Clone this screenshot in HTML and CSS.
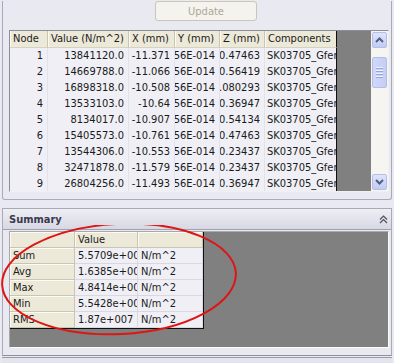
FILE: index.html
```html
<!DOCTYPE html>
<html lang="en">
<head>
    <meta charset="UTF-8">
    <title>Results</title>
    <link rel="stylesheet" href="styles.css">
</head>
<body>

    <div class="top-panel">
        <div class="toolbar">
            <button class="update-btn" disabled>Update</button>
        </div>

        <div class="grid-box">
            <div class="grid-area">
                <div class="data-grid">
                    <div class="hcell">Node</div>
                    <div class="hcell">Value (N/m^2)</div>
                    <div class="hcell">X (mm)</div>
                    <div class="hcell">Y (mm)</div>
                    <div class="hcell">Z (mm)</div>
                    <div class="hcell last">Components</div>

                    <div class="cell num">1</div><div class="cell num">13841120.0</div><div class="cell num">-11.371</div><div class="cell num">3.556E-014</div><div class="cell num">0.47463</div><div class="cell last">SK03705_Gfem-1</div>
                    <div class="cell num">2</div><div class="cell num">14669788.0</div><div class="cell num">-11.066</div><div class="cell num">3.556E-014</div><div class="cell num">0.56419</div><div class="cell last">SK03705_Gfem-1</div>
                    <div class="cell num">3</div><div class="cell num">16898318.0</div><div class="cell num">-10.508</div><div class="cell num">3.556E-014</div><div class="cell num">0.080293</div><div class="cell last">SK03705_Gfem-1</div>
                    <div class="cell num">4</div><div class="cell num">13533103.0</div><div class="cell num">-10.64</div><div class="cell num">3.556E-014</div><div class="cell num">0.36947</div><div class="cell last">SK03705_Gfem-1</div>
                    <div class="cell num">5</div><div class="cell num">8134017.0</div><div class="cell num">-10.907</div><div class="cell num">3.556E-014</div><div class="cell num">0.54134</div><div class="cell last">SK03705_Gfem-1</div>
                    <div class="cell num">6</div><div class="cell num">15405573.0</div><div class="cell num">-10.761</div><div class="cell num">3.556E-014</div><div class="cell num">0.47463</div><div class="cell last">SK03705_Gfem-1</div>
                    <div class="cell num">7</div><div class="cell num">13544306.0</div><div class="cell num">-10.553</div><div class="cell num">3.556E-014</div><div class="cell num">0.23437</div><div class="cell last">SK03705_Gfem-1</div>
                    <div class="cell num">8</div><div class="cell num">32471878.0</div><div class="cell num">-11.579</div><div class="cell num">3.556E-014</div><div class="cell num">0.23437</div><div class="cell last">SK03705_Gfem-1</div>
                    <div class="cell num">9</div><div class="cell num">26804256.0</div><div class="cell num">-11.493</div><div class="cell num">3.556E-014</div><div class="cell num">0.36947</div><div class="cell last">SK03705_Gfem-1</div>
                </div>
            </div>

            <div class="scrollbar">
                <div class="sb-btn">
                    <svg width="9" height="6" viewBox="0 0 9 6"><path d="M1 5 L4.5 1.5 L8 5" fill="none" stroke="#4d6185" stroke-width="2"/></svg>
                </div>
                <div class="sb-track">
                    <div class="sb-thumb">
                        <span></span><span></span><span></span><span></span>
                    </div>
                </div>
                <div class="sb-btn">
                    <svg width="9" height="6" viewBox="0 0 9 6"><path d="M1 1 L4.5 4.5 L8 1" fill="none" stroke="#4d6185" stroke-width="2"/></svg>
                </div>
            </div>
        </div>
    </div>

    <div class="summary-panel">
        <div class="summary-head">
            <span class="summary-title">Summary</span>
            <svg class="collapse" width="9" height="9" viewBox="0 0 9 9"><path d="M1 4.5 L4.5 1 L8 4.5 M1 8 L4.5 4.5 L8 8" fill="none" stroke="#505060" stroke-width="1.2"/></svg>
        </div>
        <div class="summary-body">
            <div class="summary-area">
                <div class="sum-grid">
                    <div class="rh"></div><div class="sh">Value</div><div class="sh"></div>
                    <div class="rh">Sum</div><div class="sc">5.5709e+008</div><div class="sc">N/m^2</div>
                    <div class="rh">Avg</div><div class="sc">1.6385e+007</div><div class="sc">N/m^2</div>
                    <div class="rh">Max</div><div class="sc">4.8414e+007</div><div class="sc">N/m^2</div>
                    <div class="rh">Min</div><div class="sc">5.5428e+006</div><div class="sc">N/m^2</div>
                    <div class="rh">RMS</div><div class="sc">1.87e+007</div><div class="sc">N/m^2</div>
                </div>
            </div>
            <svg class="mark" width="394" height="140" viewBox="0 0 394 140">
                <ellipse cx="119" cy="54" rx="117" ry="55" transform="rotate(-3 119 54)" fill="none" stroke="#dd1515" stroke-width="2"/>
            </svg>
        </div>
    </div>

    <div class="next-panel"></div>

</body>
</html>
```

FILE: styles.css
```css
body {
    margin: 0;
    width: 394px;
    height: 363px;
    overflow: hidden;
    background-color: #e9e9f1;
    font-family: "DejaVu Sans Condensed", "Liberation Sans", sans-serif;
    font-size: 11px;
    color: #1a1a1a;
}

.top-panel {
    margin: 0 2px;
    height: 198px;
    border: 1px solid #a9a9b8;
    border-top: none;
    border-radius: 0 0 3px 3px;
}

.toolbar {
    height: 29px;
}

.update-btn {
    display: block;
    margin: 1px 0 0 152px;
    width: 102px;
    height: 20px;
    background-color: #f4f3ee;
    border: 1px solid #c9c7ba;
    border-radius: 3px;
    color: #aca899;
    font-family: inherit;
    font-size: 11px;
    padding: 0;
}

.grid-box {
    margin-left: 6px;
    width: 380px;
    height: 162px;
    box-sizing: border-box;
    border: 1px solid #7f9db9;
    border-color: #8e8e98 #f0f0f0 #f0f0f0 #8e8e98;
    display: flex;
    overflow: hidden;
}

.grid-area {
    width: 361px;
    background-color: #808080;
}

.data-grid {
    display: grid;
    grid-template-columns: 38px 81px 46px 45px 45px 72px;
    grid-template-rows: 17px;
    grid-auto-rows: 16px;
    width: 327px;
}

.hcell {
    background-color: #ece9d8;
    border-right: 1px solid #c8c5b2;
    border-bottom: 1px solid #d6d2c2;
    box-shadow: inset 1px 0 #fbfaf6;
    padding-left: 3px;
    line-height: 16px;
    white-space: nowrap;
    overflow: hidden;
}

.cell {
    background-color: #efeff5;
    border-right: 1px solid #e2e2ea;
    line-height: 16px;
    white-space: nowrap;
    overflow: hidden;
    padding-left: 2px;
}

.cell.num {
    display: flex;
    justify-content: flex-end;
    padding: 0 4px 0 0;
}

.hcell.last, .cell.last {
    border-right: 1px solid #101010;
}

.scrollbar {
    width: 17px;
    display: flex;
    flex-direction: column;
    background-color: #f6f5f1;
}

.sb-btn {
    height: 16px;
    margin: 1px 1px;
    box-sizing: border-box;
    border: 1px solid #b4bfe8;
    border-radius: 2px;
    background: linear-gradient(#dfe4fb, #c2cbf4);
    display: flex;
    align-items: center;
    justify-content: center;
}

.sb-track {
    flex: 1;
    padding-top: 8px;
}

.sb-thumb {
    margin: 0 1px;
    height: 31px;
    box-sizing: border-box;
    border: 1px solid #b4bfe8;
    border-radius: 2px;
    background: linear-gradient(90deg, #d0d8fa, #c4cdf6);
    display: flex;
    flex-direction: column;
    align-items: center;
    justify-content: center;
    gap: 1px;
}

.sb-thumb span {
    width: 7px;
    height: 1px;
    background-color: #eef1ff;
    border-bottom: 1px solid #98a4d8;
}

.summary-panel {
    margin: 8px 2px 0;
    height: 146px;
    border: 1px solid #a9a9b8;
    border-bottom-color: #8f8f9e;
}

.summary-head {
    height: 20px;
    display: flex;
    align-items: center;
    justify-content: space-between;
    padding: 0 3px 0 6px;
    background: linear-gradient(#eeeef4, #d8d8e4);
    border-bottom: 1px solid #a0a0b0;
}

.summary-title {
    font-weight: bold;
    font-size: 11px;
    color: #3a3a4e;
}

.summary-body {
    position: relative;
    padding: 1px 0 0 6px;
}

.summary-area {
    width: 380px;
    height: 117px;
    box-sizing: border-box;
    border: 1px solid #8e8e98;
    border-color: #a8a8a8 #fdfdf8 #fdfdf8 #a8a8a8;
    background-color: #808080;
}

.sum-grid {
    display: grid;
    grid-template-columns: 65px 63px 65px;
    grid-auto-rows: 16px;
    width: 193px;
    border-right: 1px solid #101010;
    border-bottom: 1px solid #101010;
}

.rh, .sh {
    background-color: #ece9d8;
    border-right: 1px solid #c8c5b2;
    border-bottom: 1px solid #c8c5b2;
    box-shadow: inset 1px 1px #fbfaf6;
    padding-left: 3px;
    line-height: 15px;
    white-space: nowrap;
    overflow: hidden;
}

.sc {
    background-color: #efeff5;
    border-right: 1px solid #d8d8e0;
    border-bottom: 1px solid #d8d8e0;
    padding-left: 3px;
    line-height: 15px;
    white-space: nowrap;
    overflow: hidden;
}

.mark {
    position: absolute;
    left: -3px;
    top: -5px;
}

.next-panel {
    margin: 1px 2px 0;
    height: 10px;
    border-top: 1px solid #9a9aaa;
    background-color: #e4e4ee;
}
```
